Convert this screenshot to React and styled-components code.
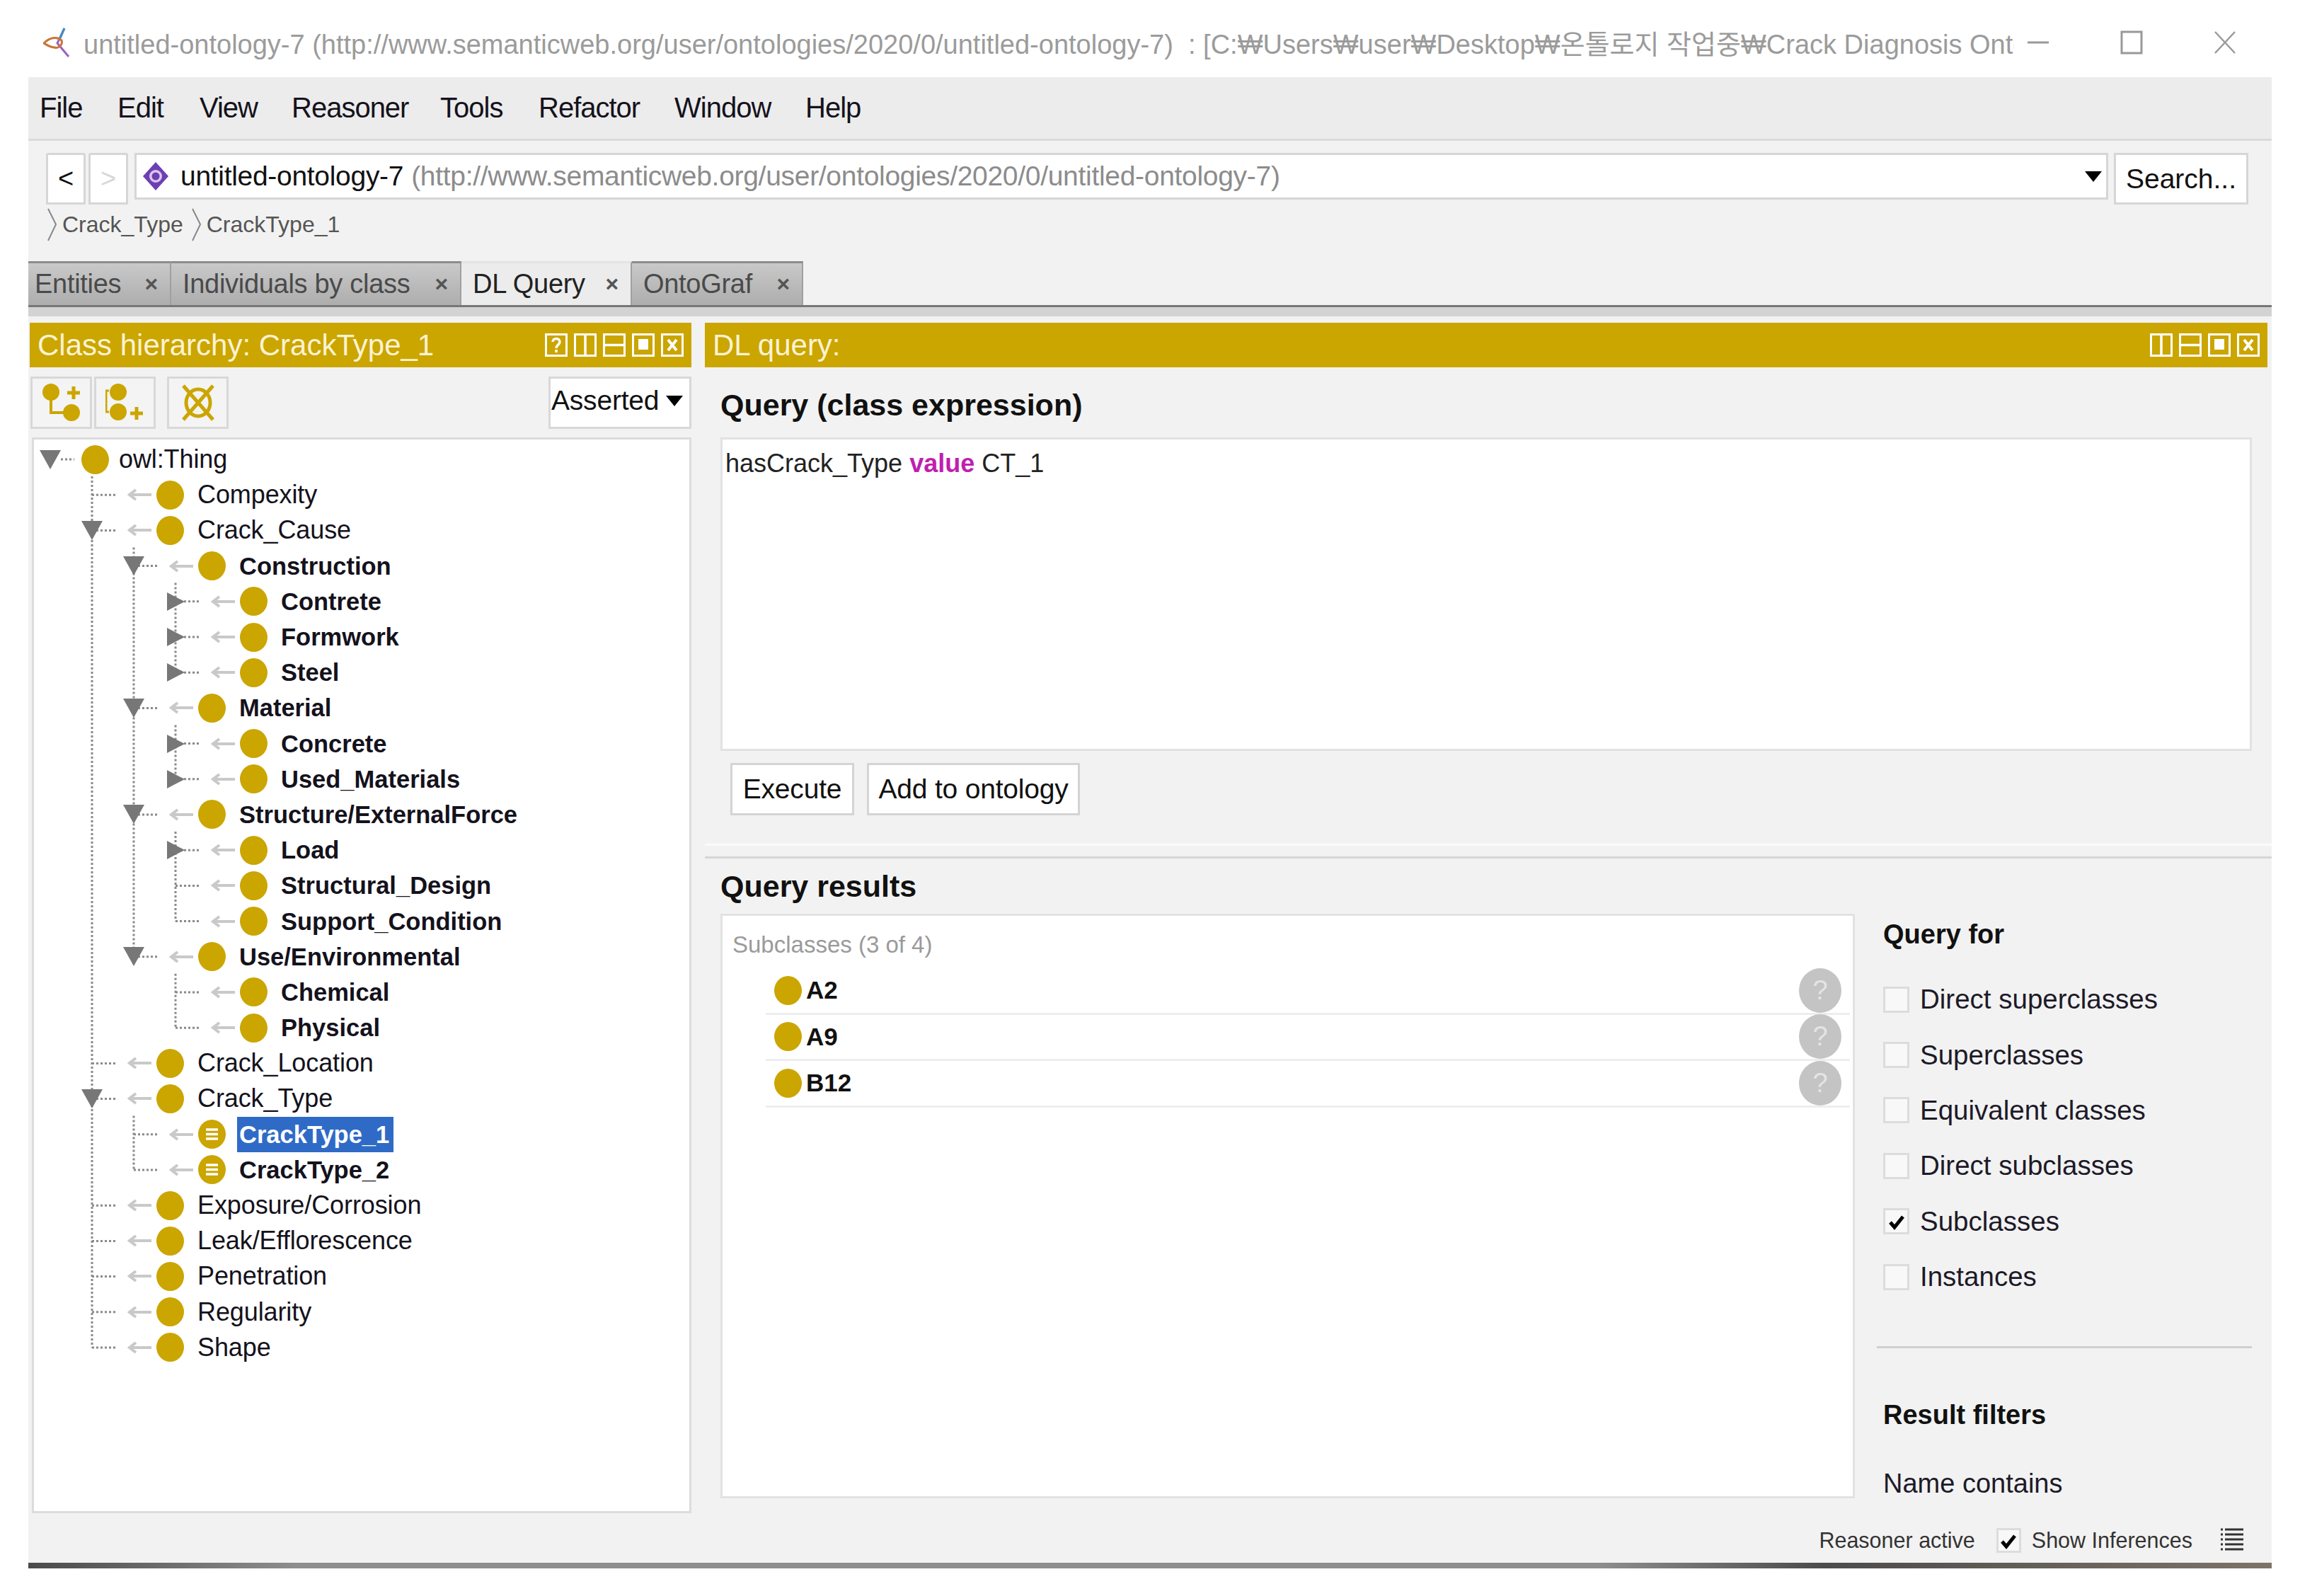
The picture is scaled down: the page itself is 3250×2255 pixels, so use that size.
import styled, { createGlobalStyle } from "styled-components";

const GOLD = "#cba500";
const SANS = `"Liberation Sans", Arial, sans-serif`;

const GlobalStyle = createGlobalStyle`
  html, body {
    margin: 0;
    padding: 0;
    background: #ffffff;
  }
  * {
    box-sizing: border-box;
  }
`;

const Page = styled.div`
  width: 3250px;
  height: 2255px;
  padding: 0 40px;
  overflow: hidden;
  background: #ffffff;
  font-family: ${SANS};
  color: #111;
`;

const TitleBar = styled.div`
  display: flex;
  align-items: center;
  height: 109px;
  padding: 10px 50px 0 21px;
  gap: 18px;
`;

const TitleText = styled.div`
  flex: 1;
  font-family: ${SANS}, "Noto Sans CJK KR";
  font-size: 38px;
  color: #9b9b9b;
  white-space: pre;
  overflow: hidden;
`;

const WindowControls = styled.div`
  display: flex;
  gap: 100px;
  margin-top: 0;
`;

const MenuBar = styled.div`
  display: flex;
  align-items: center;
  height: 90px;
  padding-left: 16px;
  background: #ececec;
  border-bottom: 3px solid #dadada;
`;

const MenuItem = styled.span`
  width: ${(p) => p.$w}px;
  font-size: 40px;
  letter-spacing: -1px;
  color: #15121c;
`;

const ToolArea = styled.div`
  height: 170px;
  padding: 17px 33px 0 25px;
  background: #f2f2f2;
`;

const NavRow = styled.div`
  display: flex;
  align-items: flex-start;
`;

const NavButton = styled.div`
  display: flex;
  align-items: center;
  justify-content: center;
  width: 56px;
  height: 73px;
  margin-right: 4px;
  font-size: 38px;
  background: #fff;
  border: 3px solid #d6d6d6;
  border-radius: 3px 3px 0 0;
  color: ${(p) => (p.$disabled ? "#d8d8d8" : "#111")};
`;

const AddressField = styled.div`
  display: flex;
  align-items: center;
  flex: 1;
  height: 66px;
  margin-left: 5px;
  padding: 0 6px 0 8px;
  background: #fff;
  border: 3px solid #d6d6d6;
`;

const AddressName = styled.span`
  margin-left: 16px;
  font-size: 39px;
  letter-spacing: -0.3px;
  color: #111;
`;

const AddressIri = styled.span`
  margin-left: 11px;
  font-size: 39px;
  letter-spacing: -0.3px;
  color: #8c8c8c;
`;

const SearchButton = styled.div`
  display: flex;
  align-items: center;
  justify-content: center;
  width: 190px;
  height: 73px;
  margin-left: 8px;
  font-size: 39px;
  background: #fff;
  border: 3px solid #d6d6d6;
`;

const DropCaret = styled.span`
  width: 0;
  height: 0;
  border-left: 12px solid transparent;
  border-right: 12px solid transparent;
  border-top: 15px solid #000;
`;

const Breadcrumbs = styled.div`
  display: flex;
  align-items: center;
  height: 47px;
  margin-top: 5px;
  padding-left: 2px;
`;

const Crumb = styled.span`
  margin: 0 12px 0 8px;
  font-size: 32px;
  color: #555;
`;

const TabStrip = styled.div`
  display: flex;
  height: 65px;
  background: #f2f2f2;
  border-bottom: 3px solid #777;
`;

const Tab = styled.div`
  display: flex;
  align-items: center;
  width: ${(p) => p.$w}px;
  height: 62px;
  padding: 0 17px 0 ${(p) => p.$pad}px;
  font-size: 38px;
  letter-spacing: -0.3px;
  color: ${(p) => (p.$active ? "#222" : "#4a4a4a")};
  background: ${(p) =>
    p.$active ? "#ececec" : "linear-gradient(#c9c9c9, #adadad)"};
  border-top: 3px solid ${(p) => (p.$active ? "#e4e4e4" : "#8c8c8c")};
  border-right: 2px solid #a0a0a0;
`;

const TabClose = styled.span`
  margin-left: auto;
  font-size: 32px;
  font-weight: bold;
  color: #555;
`;

const TabUnderStrip = styled.div`
  height: 13px;
  background: #d3d3d3;
`;

const Workspace = styled.div`
  display: flex;
  height: 1698px;
  padding: 9px 6px 0 2px;
  background: #f2f2f2;
`;

const Column = styled.div`
  display: flex;
  flex-direction: column;
  width: ${(p) => (p.$w ? `${p.$w}px` : "auto")};
  flex: ${(p) => (p.$w ? "none" : "1")};
  margin-right: ${(p) => p.$gap || 0}px;
  min-width: 0;
`;

const PaneHeader = styled.div`
  display: flex;
  align-items: center;
  flex: none;
  height: 63px;
  padding: 0 11px;
  background: ${GOLD};
`;

const PaneTitle = styled.span`
  font-size: 42px;
  color: #fbf3d2;
`;

const PaneIcons = styled.div`
  display: flex;
  gap: 9px;
  margin-left: auto;
`;

const HierarchyTools = styled.div`
  display: flex;
  align-items: flex-start;
  flex: none;
  height: 99px;
  padding-top: 13px;
  padding-left: 1px;
`;

const ToolButton = styled.div`
  display: flex;
  align-items: center;
  justify-content: center;
  width: 87px;
  height: 74px;
  margin-right: ${(p) => p.$gap || 3}px;
  border: 3px solid #d8d8d8;
  background: #f4f4f4;
`;

const AssertedSelect = styled.div`
  display: flex;
  align-items: center;
  justify-content: space-between;
  width: 202px;
  height: 74px;
  margin-left: auto;
  padding: 0 9px 6px 1px;
  font-size: 39px;
  letter-spacing: -0.2px;
  background: #fff;
  border: 3px solid #d8d8d8;
`;

const TreePanel = styled.div`
  position: relative;
  flex: none;
  height: 1520px;
  margin-left: 3px;
  padding-top: 3px;
  background: #fff;
  border: 3px solid #dcdcdc;
`;

const TreeLines = styled.svg`
  position: absolute;
  top: 0;
  left: 0;
`;

const TreeRow = styled.div`
  position: relative;
  display: flex;
  align-items: center;
  height: 50.2px;
  padding-left: ${(p) => 8 + 59 * p.$depth}px;
`;

const Twist = styled.div`
  display: flex;
  align-items: center;
  justify-content: center;
  flex: none;
  width: 30px;
`;

const TwistDown = styled.span`
  border-left: 15px solid transparent;
  border-right: 15px solid transparent;
  border-top: 27px solid #777;
`;

const TwistRight = styled.span`
  border-top: 13px solid transparent;
  border-bottom: 13px solid transparent;
  border-left: 25px solid #777;
`;

const IsAArrow = styled.svg`
  flex: none;
  margin-left: 35px;
`;

const ClassDot = styled.span`
  display: flex;
  align-items: center;
  justify-content: center;
  flex: none;
  width: 39px;
  height: 41px;
  margin-left: ${(p) => p.$gap}px;
  border-radius: 50%;
  background: ${GOLD};
`;

const TreeLabel = styled.span`
  margin-left: ${(p) => p.$gap}px;
  padding: 3px 6px 3px 3px;
  font-size: ${(p) => (p.$bold ? 34.5 : 36)}px;
  font-weight: ${(p) => (p.$bold ? "bold" : "normal")};
  letter-spacing: ${(p) => (p.$bold ? "0" : "-0.1px")};
  line-height: 44px;
  color: ${(p) => (p.$selected ? "#fff" : "#14121c")};
  background: ${(p) => (p.$selected ? "#2f6bc6" : "transparent")};
`;

const Section = styled.div`
  padding: 0 22px;
`;

const SectionTitle = styled.div`
  display: flex;
  align-items: center;
  height: 99px;
  padding-top: 7px;
  font-size: 43px;
  font-weight: bold;
  color: #111;
`;

const ExpressionBox = styled.div`
  height: 443px;
  padding: 13px 4px;
  font-size: 36px;
  background: #fff;
  border: 3px solid #e2e2e2;
  color: #222;
`;

const Keyword = styled.span`
  font-weight: bold;
  color: #c01fb0;
`;

const QueryActions = styled.div`
  display: flex;
  gap: 18px;
  padding: 17px 0 0 14px;
  height: 131px;
`;

const ActionButton = styled.div`
  display: flex;
  align-items: center;
  justify-content: center;
  width: ${(p) => p.$w}px;
  height: 74px;
  font-size: 39px;
  letter-spacing: -0.2px;
  background: #fff;
  border: 3px solid #d4d4d4;
`;

const SectionDivider = styled.div`
  height: 21px;
  margin-right: -6px;
  border-top: 3px solid #fafafa;
  border-bottom: 3px solid #d6d6d6;
`;

const ResultsTitle = styled(SectionTitle)`
  height: 78px;
  padding-top: 0;
`;

const ResultsBody = styled.div`
  display: flex;
  padding: 0 0 0 22px;
`;

const ResultsBox = styled.div`
  flex: none;
  width: 1603px;
  height: 826px;
  padding: 20px 4px 0 14px;
  background: #fff;
  border: 3px solid #e2e2e2;
`;

const ResultsCaption = styled.div`
  height: 54px;
  padding-top: 2px;
  font-size: 33px;
  color: #9a9a9a;
`;

const ResultRow = styled.div`
  display: flex;
  align-items: center;
  height: 65.5px;
  margin-left: 47px;
  padding: 0 12px;
  border-bottom: 3px solid #eeeeee;
`;

const ResultLabel = styled.span`
  margin-left: 6px;
  font-size: 35px;
  font-weight: bold;
  color: #111;
`;

const ExplainBadge = styled.span`
  display: flex;
  align-items: center;
  justify-content: center;
  width: 60px;
  height: 63px;
  margin-left: auto;
  border-radius: 50%;
  font-size: 38px;
  color: #e4e4e4;
  background: #c4c4c4;
`;

const SideColumn = styled.div`
  flex: 1;
  margin: 0 22px 0 31px;
`;

const SideTitle = styled.div`
  display: flex;
  align-items: center;
  height: 58px;
  padding-left: 9px;
  font-size: 38px;
  font-weight: bold;
  color: #111;
`;

const QueryOptions = styled.div`
  margin-top: 24px;
  padding-left: 9px;
`;

const OptionRow = styled.div`
  display: flex;
  align-items: center;
  height: 78.4px;
  font-size: 38.5px;
  color: #1d1a28;
`;

const CheckBox = styled.span`
  display: flex;
  align-items: center;
  justify-content: center;
  flex: none;
  width: ${(p) => p.$size}px;
  height: ${(p) => p.$size}px;
  margin-right: 15px;
  border: 3px solid #dcdcdc;
  background: #f8f8f8;
`;

const SideDivider = styled.div`
  height: 3px;
  margin: 59px 0 65px;
  background: #cfcfcf;
`;

const NameContains = styled.div`
  margin-top: 43px;
  padding-left: 9px;
  font-size: 38px;
  line-height: 50px;
  color: #1d1a28;
`;

const StatusBar = styled.div`
  display: flex;
  align-items: center;
  justify-content: flex-end;
  height: 63px;
  padding: 0 40px 0 0;
  font-size: 30.5px;
  color: #333;
  background: #f2f2f2;
`;

const StatusLabel = styled.span`
  margin-right: ${(p) => p.$gap}px;
`;

const BottomEdge = styled.div`
  height: 8px;
  background: linear-gradient(90deg, #4a4a4a, #8e8e8e 12%, #8e8e8e 70%, #4c4c4c 80%, #7d7468);
`;

const TREE = [
  ["owl:Thing", 0, "open"],
  ["Compexity", 1],
  ["Crack_Cause", 1, "open"],
  ["Construction", 2, "open", "bold"],
  ["Contrete", 3, "closed", "bold"],
  ["Formwork", 3, "closed", "bold"],
  ["Steel", 3, "closed", "bold"],
  ["Material", 2, "open", "bold"],
  ["Concrete", 3, "closed", "bold"],
  ["Used_Materials", 3, "closed", "bold"],
  ["Structure/ExternalForce", 2, "open", "bold"],
  ["Load", 3, "closed", "bold"],
  ["Structural_Design", 3, null, "bold"],
  ["Support_Condition", 3, null, "bold"],
  ["Use/Environmental", 2, "open", "bold"],
  ["Chemical", 3, null, "bold"],
  ["Physical", 3, null, "bold"],
  ["Crack_Location", 1],
  ["Crack_Type", 1, "open"],
  ["CrackType_1", 2, null, "bold", "selected"],
  ["CrackType_2", 2, null, "bold"],
  ["Exposure/Corrosion", 1],
  ["Leak/Efflorescence", 1],
  ["Penetration", 1],
  ["Regularity", 1],
  ["Shape", 1],
];

const rowY = (i) => 28 + 50.2 * i;
const depthX = (d) => 23 + 59 * d;

function TreeConnectors() {
  const lines = [];
  TREE.forEach(([name, depth, state], i) => {
    if (depth === 0) {
      lines.push(`M${depthX(0) + 15} ${rowY(i)}H${depthX(0) + 34}`);
    } else {
      lines.push(`M${depthX(depth)} ${rowY(i)}H${depthX(depth) + 35}`);
    }
    if (state === "open") {
      let last = i;
      for (let j = i + 1; j < TREE.length && TREE[j][1] > depth; j++) {
        if (TREE[j][1] === depth + 1) last = j;
      }
      lines.push(`M${depthX(depth + 1)} ${rowY(i) + 24}V${rowY(last)}`);
    }
  });
  return (
    <TreeLines width="920" height="1500">
      <path d={lines.join("")} fill="none" stroke="#8a8a8a" strokeWidth="3" strokeDasharray="3 3" />
    </TreeLines>
  );
}

function Arrow() {
  return (
    <IsAArrow width="34" height="20" viewBox="0 0 34 20">
      <path d="M34 10H3M12 3L3 10l9 7" fill="none" stroke="#c9c9c9" strokeWidth="4" />
    </IsAArrow>
  );
}

function IndividualBars() {
  return (
    <svg width="19" height="19" viewBox="0 0 19 19">
      <path d="M1 3h17M1 9.5h17M1 16h17" stroke="#fff" strokeWidth="3.4" />
    </svg>
  );
}

function TreeItem({ name, depth, state, bold, selected }) {
  const leaf = name.startsWith("CrackType_");
  return (
    <TreeRow $depth={depth}>
      <Twist>
        {state === "open" && <TwistDown />}
        {state === "closed" && <TwistRight />}
      </Twist>
      {depth > 0 && <Arrow />}
      <ClassDot $gap={depth > 0 ? 7 : 29}>{leaf && <IndividualBars />}</ClassDot>
      <TreeLabel $gap={depth > 0 ? 16 : 11} $bold={bold} $selected={selected}>
        {name}
      </TreeLabel>
    </TreeRow>
  );
}

function PaneIcon({ kind }) {
  const paths = {
    help: null,
    columns: <path d="M16 2v29" stroke="#fff" strokeWidth="3.5" />,
    rows: <path d="M2 16.5h28" stroke="#fff" strokeWidth="3.5" />,
    max: <path d="M9 8h14v15H9z" fill="#fff" />,
    close: <path d="M10 9l12 15M22 9L10 24" stroke="#fff" strokeWidth="4" />,
  };
  return (
    <svg width="32" height="33" viewBox="0 0 32 33">
      <rect x="1.5" y="1.5" width="29" height="30" fill="none" stroke="#fff" strokeWidth="3" />
      {kind === "help" && (
        <path d="M11 12c0-6 10-6 10 0 0 4-5 4-5 9M16 23v4" fill="none" stroke="#fff" strokeWidth="3.5" />
      )}
      {paths[kind]}
    </svg>
  );
}

function Tick({ size }) {
  return (
    <svg width={size} height={size} viewBox="0 0 24 24">
      <path d="M3 13l6 7L21 5" fill="none" stroke="#000" strokeWidth="5" />
    </svg>
  );
}

function Chevron() {
  return (
    <svg width="13" height="47" viewBox="0 0 13 47">
      <path d="M1 1l11 22L1 46" fill="none" stroke="#888" strokeWidth="2" />
    </svg>
  );
}

const OPTIONS = [
  ["Direct superclasses"],
  ["Superclasses"],
  ["Equivalent classes"],
  ["Direct subclasses"],
  ["Subclasses", true],
  ["Instances"],
];

export default function App() {
  return (
    <Page>
      <GlobalStyle />
      <TitleBar>
        <svg width="39" height="42" viewBox="0 0 39 42">
          <path d="M30 1L20 22l16 19" fill="none" stroke="#9a62c0" strokeWidth="3" />
          <path d="M30 1l-6 14" fill="none" stroke="#3f8fc0" strokeWidth="3" />
          <path d="M1 22c8-8 18-10 25-4 2 6-4 12-10 10C10 28 6 25 1 22z" fill="none" stroke="#c8743a" strokeWidth="3" />
        </svg>
        <TitleText>
          {"untitled-ontology-7 (http://www.semanticweb.org/user/ontologies/2020/0/untitled-ontology-7)  : [C:₩Users₩user₩Desktop₩온톨로지 작업중₩Crack Diagnosis Ontol..."}
        </TitleText>
        <WindowControls>
          <svg width="32" height="34" viewBox="0 0 32 34">
            <path d="M1 17h30" stroke="#999" strokeWidth="3" />
          </svg>
          <svg width="32" height="34" viewBox="0 0 32 34">
            <rect x="2" y="2" width="28" height="30" fill="none" stroke="#999" strokeWidth="3" />
          </svg>
          <svg width="32" height="34" viewBox="0 0 32 34">
            <path d="M2 2l28 30M30 2L2 32" fill="none" stroke="#999" strokeWidth="2.5" />
          </svg>
        </WindowControls>
      </TitleBar>

      <MenuBar>
        <MenuItem $w={110}>File</MenuItem>
        <MenuItem $w={116}>Edit</MenuItem>
        <MenuItem $w={130}>View</MenuItem>
        <MenuItem $w={210}>Reasoner</MenuItem>
        <MenuItem $w={139}>Tools</MenuItem>
        <MenuItem $w={192}>Refactor</MenuItem>
        <MenuItem $w={185}>Window</MenuItem>
        <MenuItem $w={100}>Help</MenuItem>
      </MenuBar>

      <ToolArea>
        <NavRow>
          <NavButton>&lt;</NavButton>
          <NavButton $disabled>&gt;</NavButton>
          <AddressField>
            <svg width="38" height="42" viewBox="0 0 38 42">
              <path d="M19 1l18 20-18 20L1 21z" fill="#6d3fb2" />
              <circle cx="19" cy="21" r="9" fill="#d9c8ee" />
              <circle cx="19" cy="21" r="5.5" fill="#6d3fb2" />
            </svg>
            <AddressName>untitled-ontology-7</AddressName>
            <AddressIri>(http://www.semanticweb.org/user/ontologies/2020/0/untitled-ontology-7)</AddressIri>
            <DropCaret style={{ marginLeft: "auto" }} />
          </AddressField>
          <SearchButton>Search...</SearchButton>
        </NavRow>
        <Breadcrumbs>
          <Chevron />
          <Crumb>Crack_Type</Crumb>
          <Chevron />
          <Crumb>CrackType_1</Crumb>
        </Breadcrumbs>
      </ToolArea>

      <TabStrip>
        <Tab $w={202} $pad={9}>Entities<TabClose>×</TabClose></Tab>
        <Tab $w={410} $pad={16}>Individuals by class<TabClose>×</TabClose></Tab>
        <Tab $w={241} $pad={16} $active>DL Query<TabClose>×</TabClose></Tab>
        <Tab $w={242} $pad={16}>OntoGraf<TabClose>×</TabClose></Tab>
      </TabStrip>
      <TabUnderStrip />

      <Workspace>
        <Column $w={935} $gap={19}>
          <PaneHeader>
            <PaneTitle>Class hierarchy: CrackType_1</PaneTitle>
            <PaneIcons>
              <PaneIcon kind="help" />
              <PaneIcon kind="columns" />
              <PaneIcon kind="rows" />
              <PaneIcon kind="max" />
              <PaneIcon kind="close" />
            </PaneIcons>
          </PaneHeader>
          <HierarchyTools>
            <ToolButton>
              <svg width="56" height="54" viewBox="0 0 56 54">
                <circle cx="13" cy="12" r="12" fill={GOLD} />
                <circle cx="42" cy="41" r="12" fill={GOLD} />
                <path d="M13 22v19h20" fill="none" stroke={GOLD} strokeWidth="4" />
                <path d="M45 4v18M36 13h18" stroke={GOLD} strokeWidth="5" />
              </svg>
            </ToolButton>
            <ToolButton $gap={16}>
              <svg width="56" height="54" viewBox="0 0 56 54">
                <circle cx="18" cy="12" r="12" fill={GOLD} />
                <circle cx="18" cy="40" r="12" fill={GOLD} />
                <path d="M5 10H1v30h4" fill="none" stroke={GOLD} strokeWidth="3" />
                <path d="M44 33v18M35 42h18" stroke={GOLD} strokeWidth="5" />
              </svg>
            </ToolButton>
            <ToolButton>
              <svg width="48" height="52" viewBox="0 0 48 52">
                <ellipse cx="24" cy="26" rx="17" ry="19" fill="none" stroke={GOLD} strokeWidth="5" />
                <path d="M3 2l42 48M45 2L3 50" stroke={GOLD} strokeWidth="5" />
              </svg>
            </ToolButton>
            <AssertedSelect>
              Asserted
              <DropCaret />
            </AssertedSelect>
          </HierarchyTools>
          <TreePanel>
            <TreeConnectors />
            {TREE.map(([name, depth, state, weight, selected]) => (
              <TreeItem
                key={name}
                name={name}
                depth={depth}
                state={state}
                bold={weight === "bold"}
                selected={selected === "selected"}
              />
            ))}
          </TreePanel>
        </Column>

        <Column>
          <PaneHeader>
            <PaneTitle>DL query:</PaneTitle>
            <PaneIcons>
              <PaneIcon kind="columns" />
              <PaneIcon kind="rows" />
              <PaneIcon kind="max" />
              <PaneIcon kind="close" />
            </PaneIcons>
          </PaneHeader>
          <Section>
            <SectionTitle>Query (class expression)</SectionTitle>
            <ExpressionBox>
              hasCrack_Type <Keyword>value</Keyword> CT_1
            </ExpressionBox>
            <QueryActions>
              <ActionButton $w={175}>Execute</ActionButton>
              <ActionButton $w={301}>Add to ontology</ActionButton>
            </QueryActions>
          </Section>
          <SectionDivider />
          <Section>
            <ResultsTitle>Query results</ResultsTitle>
          </Section>
          <ResultsBody>
            <ResultsBox>
              <ResultsCaption>Subclasses (3 of 4)</ResultsCaption>
              {["A2", "A9", "B12"].map((name) => (
                <ResultRow key={name}>
                  <ClassDot $gap={0} />
                  <ResultLabel>{name}</ResultLabel>
                  <ExplainBadge>?</ExplainBadge>
                </ResultRow>
              ))}
            </ResultsBox>
            <SideColumn>
              <SideTitle>Query for</SideTitle>
              <QueryOptions>
                {OPTIONS.map(([label, checked]) => (
                  <OptionRow key={label}>
                    <CheckBox $size={37}>{checked && <Tick size={24} />}</CheckBox>
                    {label}
                  </OptionRow>
                ))}
              </QueryOptions>
              <SideDivider />
              <SideTitle>Result filters</SideTitle>
              <NameContains>Name contains</NameContains>
            </SideColumn>
          </ResultsBody>
        </Column>
      </Workspace>

      <StatusBar>
        <StatusLabel $gap={30}>Reasoner active</StatusLabel>
        <CheckBox $size={35}><Tick size={24} /></CheckBox>
        <StatusLabel $gap={40}>Show Inferences</StatusLabel>
        <svg width="32" height="36" viewBox="0 0 32 36">
          <path d="M6 2h26M6 9h26M6 16h26M6 23h26M6 30h26" stroke="#333" strokeWidth="3" />
          <path d="M0 2h3M0 9h3M0 16h3M0 23h3M0 30h3" stroke="#333" strokeWidth="3" />
        </svg>
      </StatusBar>
      <BottomEdge />
    </Page>
  );
}
